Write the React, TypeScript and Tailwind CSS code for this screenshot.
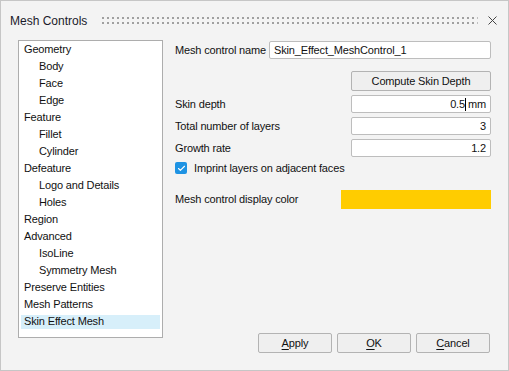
import { Check } from "lucide-react"

const treeItems: { label: string; child?: boolean; selected?: boolean }[] = [
  { label: "Geometry" },
  { label: "Body", child: true },
  { label: "Face", child: true },
  { label: "Edge", child: true },
  { label: "Feature" },
  { label: "Fillet", child: true },
  { label: "Cylinder", child: true },
  { label: "Defeature" },
  { label: "Logo and Details", child: true },
  { label: "Holes", child: true },
  { label: "Region" },
  { label: "Advanced" },
  { label: "IsoLine", child: true },
  { label: "Symmetry Mesh", child: true },
  { label: "Preserve Entities" },
  { label: "Mesh Patterns" },
  { label: "Skin Effect Mesh", selected: true },
]

function NumberField({ value, unit }: { value: string; unit?: boolean }) {
  return (
    <div className="w-[140px] h-[18px] bg-white border border-[#bdbdbd] rounded-[2px] flex items-center justify-end pr-[4px]">
      <span>{value}</span>
      {unit && (
        <>
          <span className="w-px h-[13px] bg-black" />
          <span className="ml-[2px]">mm</span>
        </>
      )}
    </div>
  )
}

function DialogButton({ children }: { children: React.ReactNode }) {
  return (
    <button className="w-[74px] h-[20px] bg-[#efefef] border border-[#b3b3b3] rounded-[2px] flex items-center justify-center text-[#111]">
      {children}
    </button>
  )
}

export default function App() {
  return (
    <div className="w-[509px] h-[371px] bg-[#f3f3f3] border border-[#c6c6c6] font-['Liberation_Sans',Arial,sans-serif] text-[11px] tracking-[-0.15px] text-[#111] flex flex-col">
      {/* Title bar */}
      <div className="h-[39px] flex items-center pl-[9px] pr-[11px]">
        <span className="text-[12px] tracking-normal text-[#1a1a2a]">Mesh Controls</span>
        <svg className="flex-1 h-[8px] ml-[15px] mr-[10px]">
          <defs>
            <pattern id="grip" width="5" height="5" patternUnits="userSpaceOnUse">
              <rect x="0" y="0" width="2" height="2" fill="#a0a0a0" />
            </pattern>
          </defs>
          <rect x="0" y="0" width="100%" height="7" fill="url(#grip)" />
        </svg>
        <svg width="9" height="9" viewBox="0 0 9 9" className="mb-px">
          <path d="M0.5 0.5L8.5 8.5M8.5 0.5L0.5 8.5" stroke="#444" strokeWidth="1" />
        </svg>
      </div>

      {/* Body */}
      <div className="flex items-start pl-[17px]">
        {/* Tree */}
        <div className="w-[145px] h-[298px] bg-white border border-[#adadad] px-[2px]">
          {treeItems.map((item) => (
            <div key={item.label} className="h-[17px] flex items-center">
              <div
                className={`h-[14px] w-full flex items-center ${item.child ? "pl-[18px]" : "pl-[3px]"} ${
                  item.selected ? "bg-[#d7effa]" : ""
                }`}
              >
                {item.label}
              </div>
            </div>
          ))}
        </div>

        {/* Form */}
        <div className="ml-[12px] w-[316px] h-[313px] flex flex-col">
          <div className="flex items-center justify-between mt-px">
            <span>Mesh control name</span>
            <div className="w-[222px] h-[18px] bg-white border border-[#bdbdbd] rounded-[2px] flex items-center pl-[4px]">
              Skin_Effect_MeshControl_1
            </div>
          </div>

          <div className="flex justify-end mt-[12px]">
            <button className="w-[140px] h-[20px] bg-[#efefef] border border-[#b3b3b3] rounded-[2px] flex items-center justify-center">
              Compute Skin Depth
            </button>
          </div>

          <div className="flex items-center justify-between mt-[4px]">
            <span>Skin depth</span>
            <NumberField value="0.5" unit />
          </div>
          <div className="flex items-center justify-between mt-[4px]">
            <span>Total number of layers</span>
            <NumberField value="3" />
          </div>
          <div className="flex items-center justify-between mt-[4px]">
            <span>Growth rate</span>
            <NumberField value="1.2" />
          </div>

          <div className="flex items-center h-[14px] mt-[4px]">
            <div className="w-[12px] h-[12px] rounded-[2px] bg-[#1e93e3] flex items-center justify-center">
              <Check className="w-[9px] h-[9px] text-white" strokeWidth={3} />
            </div>
            <span className="ml-[7px]">Imprint layers on adjacent faces</span>
          </div>

          <div className="flex items-center justify-between mt-[15px]">
            <span>Mesh control display color</span>
            <div className="w-[150px] h-[19px] bg-[#ffcc00]" />
          </div>

          <div className="mt-auto flex justify-end gap-[5px] pr-px">
            <DialogButton>
              <span className="underline underline-offset-2">A</span>pply
            </DialogButton>
            <DialogButton>
              <span className="underline underline-offset-2">O</span>K
            </DialogButton>
            <DialogButton>
              <span className="underline underline-offset-2">C</span>ancel
            </DialogButton>
          </div>
        </div>
      </div>
    </div>
  )
}
